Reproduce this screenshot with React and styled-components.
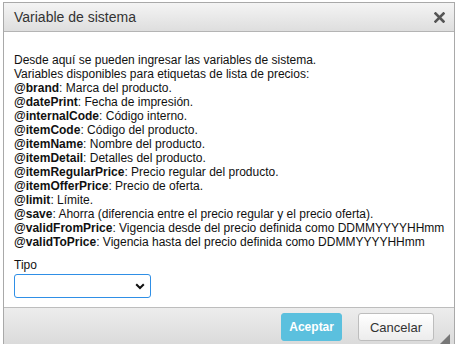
import styled, { createGlobalStyle } from "styled-components";

const Global = createGlobalStyle`
  html, body {
    margin: 0;
    padding: 0;
    background: #ffffff;
    font-family: "Liberation Sans", Arial, sans-serif;
  }
`;

const variables = [
  ["@brand", "Marca del producto."],
  ["@datePrint", "Fecha de impresión."],
  ["@internalCode", "Código interno."],
  ["@itemCode", "Código del producto."],
  ["@itemName", "Nombre del producto."],
  ["@itemDetail", "Detalles del producto."],
  ["@itemRegularPrice", "Precio regular del producto."],
  ["@itemOfferPrice", "Precio de oferta."],
  ["@limit", "Límite."],
  ["@save", "Ahorra (diferencia entre el precio regular y el precio oferta)."],
  ["@validFromPrice", "Vigencia desde del precio definida como DDMMYYYYHHmm"],
  ["@validToPrice", "Vigencia hasta del precio definida como DDMMYYYYHHmm"],
];

export default function App() {
  return (
    <Page>
      <Global />
      <Dialog>
        <TitleBar>
          <Title>Variable de sistema</Title>
          <CloseButton>
            <svg width="11" height="11" viewBox="0 0 11 11">
              <path
                d="M1.5 1.5 L9.5 9.5 M9.5 1.5 L1.5 9.5"
                stroke="#555"
                strokeWidth="2.6"
                strokeLinecap="square"
              />
            </svg>
          </CloseButton>
        </TitleBar>
        <Content>
          <Text>
            <Line>Desde aquí se pueden ingresar las variables de sistema.</Line>
            <Line>Variables disponibles para etiquetas de lista de precios:</Line>
            {variables.map(([name, desc]) => (
              <Line key={name}>
                <b>{name}</b>: {desc}
              </Line>
            ))}
          </Text>
          <Label>Tipo</Label>
          <SelectBox>
            <svg width="10" height="7" viewBox="0 0 10 7">
              <path
                d="M1.2 1.2 L5 5 L8.8 1.2"
                stroke="#111"
                strokeWidth="2"
                fill="none"
              />
            </svg>
          </SelectBox>
        </Content>
        <Footer>
          <Button $primary>Aceptar</Button>
          <Button>Cancelar</Button>
          <Grip />
        </Footer>
      </Dialog>
    </Page>
  );
}

const Page = styled.div`
  width: 457px;
  height: 344px;
  overflow: hidden;
  padding: 2px 0 0 3px;
  box-sizing: border-box;
`;

const Dialog = styled.div`
  position: relative;
  width: 452px;
  border: 1px solid #a9a9a9;
  border-bottom: none;
  background: #ffffff;
  box-sizing: border-box;
`;

const TitleBar = styled.div`
  height: 28px;
  display: flex;
  align-items: center;
  justify-content: space-between;
  padding: 0 10px;
  background: linear-gradient(#f4f4f4, #dedede);
  border-bottom: 1px solid #b4b4b4;
`;

const Title = styled.span`
  font-size: 14px;
  color: #333333;
`;

const CloseButton = styled.span`
  display: flex;
  align-items: center;
  margin-right: -1px;
`;

const Content = styled.div`
  padding: 21px 10px 9px;
`;

const Text = styled.div`
  font-size: 12px;
  line-height: 14px;
  color: #111111;
  b {
    font-weight: 700;
  }
`;

const Line = styled.div`
  white-space: nowrap;
`;

const Label = styled.div`
  margin-top: 9px;
  font-size: 12px;
  line-height: 14px;
  color: #111111;
`;

const SelectBox = styled.div`
  margin-top: 2px;
  width: 137px;
  height: 24px;
  box-sizing: border-box;
  border: 1px solid #2f8fe6;
  border-radius: 3px;
  display: flex;
  align-items: center;
  justify-content: flex-end;
  padding-right: 5px;
`;

const Footer = styled.div`
  height: 40px;
  border-top: 1px solid #bdbdbd;
  background: linear-gradient(#ededed, #d9d9d9);
  display: flex;
  align-items: flex-start;
  justify-content: flex-end;
  gap: 16px;
  padding: 5px 20px 0 0;
  box-sizing: border-box;
`;

const Button = styled.div`
  height: 28px;
  box-sizing: border-box;
  padding: 0 ${(p) => (p.$primary ? "7px" : "11px")};
  display: flex;
  align-items: center;
  font-size: ${(p) => (p.$primary ? "12px" : "13px")};
  border-radius: 3px;
  border: 1px solid ${(p) => (p.$primary ? "#5bc0de" : "#bdbdbd")};
  background: ${(p) =>
    p.$primary ? "#5bc0de" : "linear-gradient(#ffffff, #ececec)"};
  color: ${(p) => (p.$primary ? "#ffffff" : "#333333")};
  font-weight: ${(p) => (p.$primary ? 700 : 400)};
`;

const Grip = styled.div`
  position: absolute;
  right: 4px;
  bottom: 3px;
  width: 0;
  height: 0;
  border-left: 10px solid transparent;
  border-bottom: 10px solid #777777;
`;
